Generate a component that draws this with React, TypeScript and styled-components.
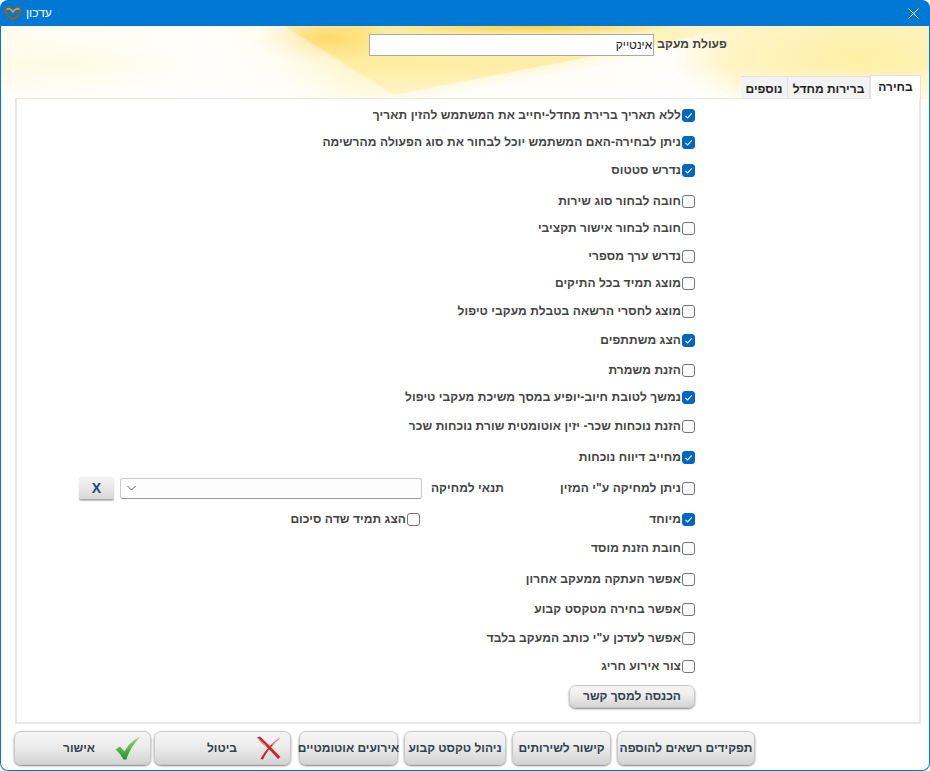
import React from "react";
import styled, { createGlobalStyle } from "styled-components";

const Global = createGlobalStyle`
  html, body { margin: 0; padding: 0; background: #fff; }
  body { font-family: "Liberation Sans", "DejaVu Sans", sans-serif; }
`;
const Win = styled.div`
  width: 930px; height: 771px; box-sizing: border-box; display: flex; flex-direction: column;
  background: #0078d4; border-radius: 8px; overflow: hidden; padding: 0 1px 1px 1px;
`;
const TitleBar = styled.div`
  height: 26px; flex: none; display: flex; align-items: center; justify-content: space-between; padding: 0 10px 0 3px; color: #fff;
`;
const TitleLeft = styled.div`display: flex; align-items: center; gap: 4px; font-size: 12px;`;
const Body = styled.div`
  flex: 1; display: flex; flex-direction: column; border-radius: 0 0 7px 7px; overflow: hidden;
  background-color: #fff; background-repeat: no-repeat; background-size: 100% 73px;
  background-image:
    linear-gradient(180deg, rgba(255,255,255,0) 0, rgba(255,255,255,0) 55%, rgba(255,255,255,.45) 100%),
    radial-gradient(ellipse 190px 70px at 860px 32px, rgba(255,238,160,.95), rgba(255,238,160,.6) 70%, rgba(255,238,160,0)),
    linear-gradient(138deg, rgba(255,255,255,0) 68%, rgba(255,255,255,.7) 78.8%, rgba(255,255,255,0) 79.2%),
    linear-gradient(349deg, rgba(255,255,255,.9) 38%, rgba(255,255,255,.55) 42.5%, rgba(255,255,255,0) 43%),
    linear-gradient(32deg, rgba(255,255,255,.75) 28%, rgba(255,255,255,.45) 38%, rgba(255,255,255,0) 38.5%),
    radial-gradient(ellipse 70px 26px at 325px 12px, rgba(255,216,100,.95), rgba(255,216,100,0)),
    radial-gradient(ellipse 150px 8px at 530px 1px, rgba(255,205,70,.9), rgba(255,205,70,0)),
    radial-gradient(ellipse 150px 30px at 40px 40px, rgba(255,236,150,.95), rgba(255,236,150,0)),
    linear-gradient(90deg, #fff4c0 0, #fff9dc 15%, #fffdf0 22%, #fff8d8 30%, #ffedA0 38%, #ffeea8 60%, #fff4c4 75%, #fff2b8 100%);
`;
const Header = styled.div`
  height: 49px; flex: none; display: flex; align-items: flex-start; gap: 3px; direction: rtl; padding: 8px 202px 0 0; box-sizing: border-box;
`;
const HeaderLabel = styled.label`
  height: 22px; line-height: 20px; white-space: nowrap; flex: none;
  font-size: 12px; font-weight: bold; color: #444; letter-spacing: .08px;
`;
const TextInput = styled.div`
  width: 285px; height: 22px; box-sizing: border-box; border: 1px solid #a8a8a8; background: #fff;
  font-size: 12px; line-height: 20px; color: #222; padding-right: 1px;
`;
const TabsArea = styled.div`
  flex: none; height: 23px; display: flex; align-items: flex-end; direction: rtl; padding-right: 8px;
`;
const Tab = styled.div<{ $active?: boolean; $w: number }>`
  width: ${p => p.$w}px; height: ${p => (p.$active ? 24 : 22)}px; box-sizing: border-box; text-align: center;
  font-size: 12px; font-weight: bold; color: #222; line-height: ${p => (p.$active ? 22 : 24)}px;
  border: 1px solid #e2e2e2; border-bottom: none; background: ${p => (p.$active ? "#fff" : "#f3f3f3")};
  margin-bottom: ${p => (p.$active ? -1 : 0)}px; position: relative; z-index: ${p => (p.$active ? 1 : 0)};
  border-left-width: ${p => (p.$active ? 1 : 0)}px;
`;
const Panel = styled.div`
  margin: 0 8px 0 14px; height: 626px; flex: none; box-sizing: border-box; background: #fff;
  border: 2px solid #e9e9e9; border-top-width: 1px; direction: rtl; padding: 9px 224px 0 0;
  display: flex; flex-direction: column;
`;
const Row = styled.div<{ $pitch: number }>`
  height: 14px; margin-bottom: ${p => p.$pitch - 14}px; display: flex; align-items: center; flex: none;
`;
const CheckLabel = styled.label<{ $w?: number }>`
  display: flex; align-items: center; gap: 1px; font-size: 12px; line-height: 14px; font-weight: bold; color: #444; white-space: nowrap; letter-spacing: .08px;
  ${p => (p.$w ? `width: ${p.$w}px; flex: none;` : "")}
`;
const Box = styled.span<{ $on?: boolean }>`
  width: 13px; height: 13px; flex: none; box-sizing: border-box; border-radius: 3px; display: flex; align-items: center; justify-content: center;
  border: 1px solid ${p => (p.$on ? "#0067c0" : "#767676")};
  background: ${p => (p.$on ? "#0067c0" : "#fbfbfb")};
`;
const FieldLabel = styled.span`
  width: 82px; flex: none; font-size: 12px; font-weight: bold; color: #444; white-space: nowrap; box-sizing: border-box; letter-spacing: .08px;
`;
const SelectBox = styled.div`
  width: 302px; height: 21px; flex: none; box-sizing: border-box; border: 1px solid #c8c8c8; border-bottom-color: #9a9a9a; border-radius: 3px;
  background: #fdfdfd; display: flex; align-items: center; padding-right: 285px;
`;
const ClearBtn = styled.button`
  width: 35px; height: 23px; margin-right: 6px; flex: none; border: none; border-bottom: 1px solid #aaa; border-radius: 2px; padding: 0;
  background: linear-gradient(#f4f4f4, #d9d9d9); box-shadow: 0 1px 1px rgba(0,0,0,.25);
  font: bold 14px "Liberation Sans", sans-serif; color: #1c4a6e;
`;
const GrayBtn = styled.button<{ $w: number; $h?: number; $icon?: boolean }>`
  width: ${p => p.$w}px; height: ${p => p.$h ?? 34}px; flex: none; box-sizing: border-box; padding: 0 ${p => (p.$icon ? 9 : 0)}px 0 0; white-space: nowrap; overflow: visible;
  border: 1px solid #c9c9c9; border-radius: 7px; display: flex; align-items: center; justify-content: ${p => (p.$icon ? "flex-start" : "center")};
  gap: 20px;
  background: linear-gradient(#f5f5f5, #ececec 45%, #d4d4d4);
  box-shadow: 0 1px 2px rgba(0,0,0,.5);
  font: bold 12px "Liberation Sans", sans-serif; color: #33414f; direction: rtl;
`;
const Footer = styled.div`
  flex: none; display: flex; direction: rtl; padding: 7px 174px 0 0; align-items: flex-start; gap: 8px;
`;
const Group = styled.div<{ $gap: number }>`display: flex; gap: ${p => p.$gap}px;`;

const Check = () => (
  <svg width="9" height="9" viewBox="0 0 10 10"><path d="M1.6 5.4 4 7.7 8.6 2.6" fill="none" stroke="#fff" strokeWidth="1.2" /></svg>
);
const C = ({ on, children, w }: { on?: boolean; children: React.ReactNode; w?: number }) => (
  <CheckLabel $w={w}><Box $on={on}>{on && <Check />}</Box>{children}</CheckLabel>
);

const rows: [string, boolean, number][] = [
  ["ללא תאריך ברירת מחדל-יחייב את המשתמש להזין תאריך", true, 27],
  ["ניתן לבחירה-האם המשתמש יוכל לבחור את סוג הפעולה מהרשימה", true, 28],
  ["נדרש סטטוס", true, 31],
  ["חובה לבחור סוג שירות", false, 27],
  ["חובה לבחור אישור תקציבי", false, 28],
  ["נדרש ערך מספרי", false, 27],
  ["מוצג תמיד בכל התיקים", false, 28],
  ["מוצג לחסרי הרשאה בטבלת מעקבי טיפול", false, 29],
  ["הצג משתתפים", true, 30],
  ["הזנת משמרת", false, 27],
  ["נמשך לטובת חיוב-יופיע במסך משיכת מעקבי טיפול", true, 29],
  ["הזנת נוכחות שכר- יזין אוטומטית שורת נוכחות שכר", false, 31],
  ["מחייב דיווח נוכחות", true, 31],
];
const rows2: [string, boolean, number][] = [
  ["חובת הזנת מוסד", false, 31],
  ["אפשר העתקה ממעקב אחרון", false, 30],
  ["אפשר בחירה מטקסט קבוע", false, 29],
  ["אפשר לעדכן ע\"י כותב המעקב בלבד", false, 28],
  ["צור אירוע חריג", false, 30],
];

export default function App() {
  return (
    <Win>
      <Global />
      <TitleBar>
        <TitleLeft>
          <svg width="18" height="15" viewBox="0 0 18 15">
            <path d="M9 13.5C5 11 1.5 8 1.5 4.8 1.5 2.2 4.5 1.2 6.5 2.6L9 5 11.5 2.6C13.5 1.2 16.5 2.2 16.5 4.8 16.5 8 13 11 9 13.5Z" fill="none" stroke="#7d6338" strokeWidth="2.4" />
            <path d="M2.5 3.5C4.5 1.8 7 3 9 6 11 3 13.5 1.8 15.5 3.5" fill="none" stroke="#e0a040" strokeWidth="1.6" />
          </svg>
          <span>עדכון</span>
        </TitleLeft>
        <svg width="11" height="11" viewBox="0 0 11 11"><path d="M.5.5 10.5 10.5M10.5.5.5 10.5" stroke="#fff" strokeWidth="1" /></svg>
      </TitleBar>
      <Body>
        <Header>
          <HeaderLabel>פעולת מעקב</HeaderLabel>
          <TextInput>אינטייק</TextInput>
        </Header>
        <TabsArea>
          <Tab $active $w={51}>בחירה</Tab>
          <Tab $w={82}>ברירות מחדל</Tab>
          <Tab $w={47}>נוספים</Tab>
        </TabsArea>
        <Panel>
          {rows.map(([t, on, h]) => <Row key={t} $pitch={h}><C on={on}>{t}</C></Row>)}
          <Row $pitch={31}>
            <C w={191}>ניתן למחיקה ע"י המזין</C>
            <FieldLabel>תנאי למחיקה</FieldLabel>
            <SelectBox>
              <svg width="9" height="6" viewBox="0 0 9 6"><path d="M.5 1 4.5 5 8.5 1" fill="none" stroke="#666" strokeWidth="1" /></svg>
            </SelectBox>
            <ClearBtn>X</ClearBtn>
          </Row>
          <Row $pitch={29}>
            <C on w={275}>מיוחד</C>
            <C>הצג תמיד שדה סיכום</C>
          </Row>
          {rows2.map(([t, on, h]) => <Row key={t} $pitch={h}><C on={on}>{t}</C></Row>)}
          <Row $pitch={14}><GrayBtn $w={126} $h={23}>הכנסה למסך קשר</GrayBtn></Row>
        </Panel>
        <Footer>
          <Group $gap={6}>
            <GrayBtn $w={138}>תפקידים רשאים להוספה</GrayBtn>
            <GrayBtn $w={99}>קישור לשירותים</GrayBtn>
            <GrayBtn $w={102}>ניהול טקסט קבוע</GrayBtn>
            <GrayBtn $w={99}>אירועים אוטומטיים</GrayBtn>
          </Group>
          <Group $gap={3}>
            <GrayBtn $w={137} $icon>
              <svg width="24" height="24" viewBox="0 0 24 24">
                <path d="M0 1.5 3 .5 C9 6 16 13 23.5 21 L21 23 C14 15 7 8 0 1.5Z" fill="#c9282d" />
                <path d="M.5 1 C4 5 7 7 10 10 L7 9 C4 7 2 4 .5 1Z" fill="#e8848a" />
                <path d="M23.5 1.5 C16 6 8 14 3.5 23 L6 23.5 C10 15 17 7 23.5 1.5Z" fill="#c22a30" />
                <path d="M23.5 1.5 C20 3 17 6 14 8.5 L16 8.5 C18 6.5 21 4 23.5 1.5Z" fill="#e8848a" />
              </svg>
              ביטול
            </GrayBtn>
            <GrayBtn $w={137} $icon>
              <svg width="26" height="24" viewBox="0 0 26 24">
                <defs>
                  <linearGradient id="okg" x1="0" y1="0" x2="0" y2="1">
                    <stop offset="0" stopColor="#9add62" />
                    <stop offset="1" stopColor="#23902f" />
                  </linearGradient>
                </defs>
                <path d="M.5 13.5 5 10.5 9.5 15.5C13 9 18 4 25.5.5 19 7 14 15 11.5 23.5L8.5 23.5C6.5 20 4 16.5.5 13.5Z" fill="url(#okg)" />
              </svg>
              אישור
            </GrayBtn>
          </Group>
        </Footer>
      </Body>
    </Win>
  );
}
